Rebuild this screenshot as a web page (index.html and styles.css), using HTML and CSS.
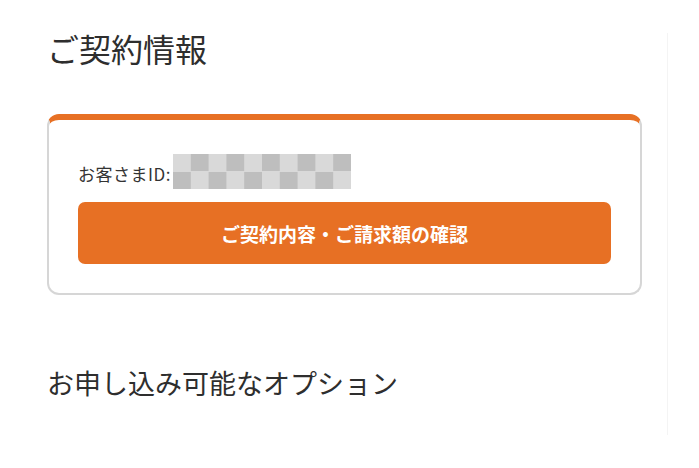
FILE: index.html
```html
<!DOCTYPE html>
<html lang="ja">
<head>
<meta charset="utf-8">
<title>ご契約情報</title>
<link rel="stylesheet" href="styles.css">
</head>
<body>
<div class="page">
  <main class="main">
    <h1 class="title">ご契約情報</h1>
    <section class="card">
      <div class="id-row">
        <span class="id-label">お客さまID:</span>
        <span class="id-mask" aria-label="マスクされたID"></span>
      </div>
      <a class="btn" href="#">ご契約内容・ご請求額の確認</a>
    </section>
    <h2 class="subtitle">お申し込み可能なオプション</h2>
  </main>
  <div class="divider"></div>
</div>
</body>
</html>
```
FILE: styles.css
```css
* { box-sizing: border-box; }
html, body { margin: 0; padding: 0; background: #fff; }
body {
  font-family: "Noto Sans CJK JP", "Noto Sans", sans-serif;
  color: #333;
}
.page {
  display: flex;
  width: 699px;
  height: 468px;
  overflow: hidden;
}
.main {
  width: 667px;
  padding: 24px 0 0 47px;
}
.divider {
  width: 1px;
  height: 402px;
  margin-top: 33px;
  background: #f4f4f4;
}
.title {
  margin: 0;
  font-size: 32px;
  font-weight: 400;
  line-height: 48px;
  color: #2e2e2e;
}
.card {
  width: 595px;
  margin-top: 42px;
  border: 2px solid #d6d6d6;
  border-top: 6px solid #e77024;
  border-radius: 12px;
  padding: 34px 29px 29px 29px;
  display: flex;
  flex-direction: column;
  gap: 13px;
}
.id-row {
  display: flex;
  align-items: center;
  gap: 2px;
}
.id-label {
  font-size: 17px;
  letter-spacing: 0.5px;
  line-height: 24px;
  color: #333;
  padding-top: 4px;
}
.id-mask {
  display: block;
  width: 178px;
  height: 35px;
  background: repeating-conic-gradient(#bebebe 0 25%, #d9d9d9 0 50%) 0 0 / 35.6px 35px;
}
.btn {
  display: flex;
  align-items: center;
  justify-content: center;
  height: 62px;
  border-radius: 7px;
  background: #e77024;
  color: #fff;
  font-size: 19px;
  font-weight: 700;
  text-decoration: none;
}
.subtitle {
  margin: 68px 0 0;
  font-size: 27px;
  font-weight: 400;
  line-height: 40px;
  color: #2e2e2e;
}
```
